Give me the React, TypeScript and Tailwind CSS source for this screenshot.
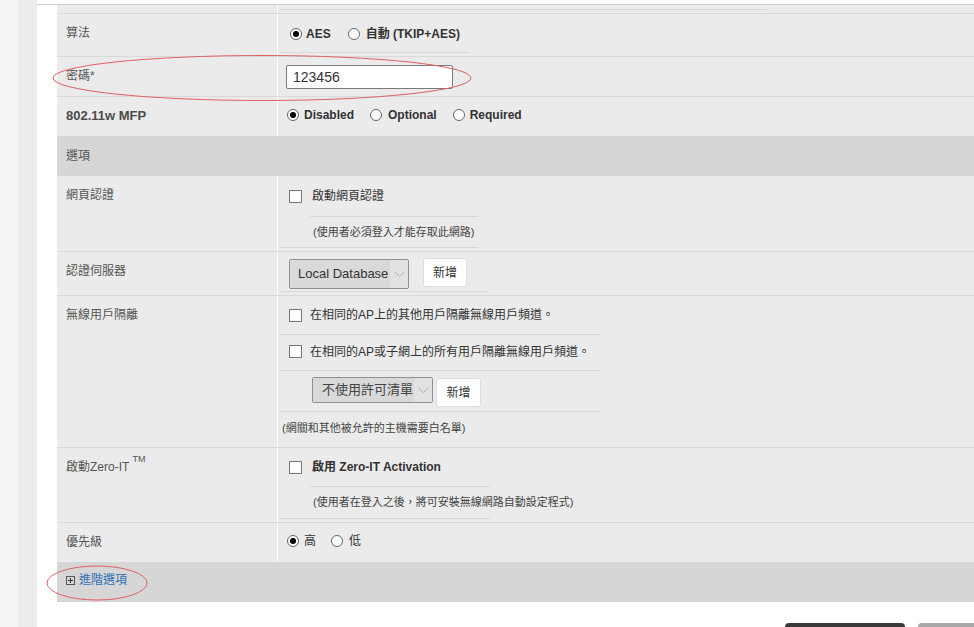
import React from "react";

function Radio({ checked }: { checked?: boolean }) {
  return (
    <span className="w-[12px] h-[12px] rounded-full border border-[#666] bg-white flex items-center justify-center shrink-0">
      {checked && <span className="w-[6px] h-[6px] rounded-full bg-black" />}
    </span>
  );
}

function Checkbox() {
  return <span className="w-[13px] h-[13px] border border-[#777] bg-white shrink-0" />;
}

function Chevron() {
  return (
    <svg width="11" height="7" viewBox="0 0 11 7" className="shrink-0">
      <path d="M0.5 0.5 L5.5 5.5 L10.5 0.5" fill="none" stroke="#b0b0b0" strokeWidth="1" />
    </svg>
  );
}

function Row({
  label,
  h,
  border = true,
  children,
}: {
  label: React.ReactNode;
  h: string;
  border?: boolean;
  children?: React.ReactNode;
}) {
  return (
    <div className={`flex ${h} ${border ? "border-b border-[#d9d9d9]" : ""}`}>
      <div className="w-[220px] shrink-0 pl-[9px] pt-[12px] leading-[14px] text-[12px] text-[#555]">{label}</div>
      <div className="flex-1 border-l border-white">{children}</div>
    </div>
  );
}

export default function App() {
  return (
    <div className="w-[974px] h-[627px] overflow-hidden flex bg-white relative font-['Liberation_Sans','Noto_Sans_CJK_TC',sans-serif]">
      <div className="w-[18px] shrink-0 bg-[#f4f4f4]" />
      <div className="w-[19px] shrink-0 bg-[#ececec]" />

      <div className="flex-1 min-w-0 flex flex-col">
        <div className="h-[4px] shrink-0" />
        <div className="border-t border-[#cdcdcd] pl-[20px]">
          <div className="w-[960px] bg-[#ebebeb]">
            {/* previous row tail */}
            <div className="flex h-[9px] border-b border-[#d9d9d9]">
              <div className="w-[220px] shrink-0" />
              <div className="flex-1 border-l border-white">
                <div className="ml-[2px] w-[487px] h-[5px] border-b border-[#d9d9d9]" />
              </div>
            </div>

            <Row label="算法" h="h-[43px]">
              <div className="ml-[2px] w-[188px] h-[39px] border-b border-[#d9d9d9] flex items-center pl-[10px] pt-[1px] text-[12px] font-bold text-[#333]">
                <Radio checked />
                <span className="ml-[4px]">AES</span>
                <span className="ml-[17px]"><Radio /></span>
                <span className="ml-[6px]">自動 (TKIP+AES)</span>
              </div>
            </Row>

            <Row label="密碼*" h="h-[40px]">
              <div className="pl-[8px] pt-[8px]">
                <div className="w-[167px] h-[24px] border border-[#7a7a7a] bg-white rounded-[2px] flex items-center pl-[6px] text-[14px] text-[#333]">
                  123456
                </div>
              </div>
            </Row>

            <Row label={<span className="font-bold text-[13px] text-[#4a4a4a]">802.11w MFP</span>} h="h-[39px]" border={false}>
              <div className="flex items-center pl-[9px] pt-[11px] h-[14px] box-content text-[12px] font-bold text-[#333]">
                <Radio checked />
                <span className="ml-[5px]">Disabled</span>
                <span className="ml-[16px]"><Radio /></span>
                <span className="ml-[6px]">Optional</span>
                <span className="ml-[16px]"><Radio /></span>
                <span className="ml-[5px]">Required</span>
              </div>
            </Row>

            <div className="h-[40px] bg-[#d6d6d6] pl-[9px] pt-[13px] leading-[14px] text-[12px] text-[#555]">選項</div>

            <Row label="網頁認證" h="h-[76px]">
              <div className="ml-[2px] w-[198px] h-[72px] border-b border-[#d9d9d9]">
                <div className="h-[40px] flex items-center pl-[9px] text-[12px] text-[#333]">
                  <Checkbox />
                  <span className="ml-[10px]">啟動網頁認證</span>
                </div>
                <div className="ml-[30px] h-[31px] border-t border-[#d9d9d9] flex items-center pl-[3px] text-[11px] text-[#444] whitespace-nowrap">
                  (使用者必須登入才能存取此網路)
                </div>
              </div>
            </Row>

            <Row label="認證伺服器" h="h-[44px]">
              <div className="ml-[2px] w-[208px] h-[40px] border-b border-[#d9d9d9] flex items-start">
                <div className="ml-[9px] mt-[7px] w-[120px] h-[30px] border border-[#8f8f8f] rounded-[2px] flex overflow-hidden">
                  <div className="flex-1 bg-[#d9d9d9] flex items-center pl-[8px] text-[13px] text-[#333] whitespace-nowrap">Local Database</div>
                  <div className="w-[18px] bg-[#e2e2e2] flex items-center justify-center">
                    <Chevron />
                  </div>
                </div>
                <div className="ml-[14px] mt-[6px] w-[44px] h-[29px] bg-white border border-[#dedede] rounded-[3px] flex items-center justify-center text-[12px] text-[#333]">
                  新增
                </div>
              </div>
            </Row>

            <Row label="無線用戶隔離" h="h-[152px]">
              <div className="ml-[2px] w-[320px]">
                <div className="h-[39px] border-b border-[#d9d9d9] flex items-center pl-[9px] text-[12px] text-[#333]">
                  <Checkbox />
                  <span className="ml-[8px]">在相同的AP上的其他用戶隔離無線用戶頻道。</span>
                </div>
                <div className="h-[36px] border-b border-[#d9d9d9] flex items-center pl-[9px] pb-[2px] text-[12px] text-[#333]">
                  <Checkbox />
                  <span className="ml-[8px]">在相同的AP或子網上的所有用戶隔離無線用戶頻道。</span>
                </div>
                <div className="h-[41px] border-b border-[#d9d9d9] flex items-start">
                  <div className="ml-[32px] mt-[6px] w-[121px] h-[26px] border border-[#8f8f8f] rounded-[2px] flex overflow-hidden">
                    <div className="flex-1 bg-[#d9d9d9] flex items-center pl-[9px] text-[13px] text-[#444] whitespace-nowrap">不使用許可清單</div>
                    <div className="w-[18px] bg-[#e2e2e2] flex items-center justify-center">
                      <Chevron />
                    </div>
                  </div>
                  <div className="ml-[3px] mt-[7px] w-[45px] h-[29px] bg-white border border-[#dedede] rounded-[3px] flex items-center justify-center text-[12px] text-[#333]">
                    新增
                  </div>
                </div>
                <div className="h-[33px] flex items-center pl-[2px] text-[11px] text-[#444] whitespace-nowrap">
                  (網關和其他被允許的主機需要白名單)
                </div>
              </div>
            </Row>

            <Row
              label={
                <span>
                  啟動Zero-IT <sup className="text-[9px] align-[5px]">TM</sup>
                </span>
              }
              h="h-[75px]"
            >
              <div className="ml-[2px] w-[210px] h-[71px] border-b border-[#d9d9d9]">
                <div className="h-[38px] flex items-center pl-[9px] text-[12px] font-bold text-[#333]">
                  <Checkbox />
                  <span className="ml-[10px]">啟用 Zero-IT Activation</span>
                </div>
                <div className="ml-[30px] h-[32px] border-t border-[#d9d9d9] flex items-center pl-[3px] text-[11px] text-[#444] whitespace-nowrap">
                  (使用者在登入之後，將可安裝無線網路自動設定程式)
                </div>
              </div>
            </Row>

            <Row label="優先級" h="h-[39px]" border={false}>
              <div className="flex items-center pl-[9px] pt-[11px] h-[14px] box-content text-[12px] text-[#333]">
                <Radio checked />
                <span className="ml-[5px]">高</span>
                <span className="ml-[15px]"><Radio /></span>
                <span className="ml-[6px]">低</span>
              </div>
            </Row>

            <div className="h-[40px] bg-[#d6d6d6] flex items-center pl-[9px] pb-[4px] text-[12px]">
              <span className="w-[9px] h-[9px] border border-[#555] flex items-center justify-center relative shrink-0">
                <span className="absolute w-[5px] h-px bg-[#333]" />
                <span className="absolute w-px h-[5px] bg-[#333]" />
              </span>
              <span className="ml-[4px] text-[#2f6fb4]">進階選項</span>
            </div>
          </div>
        </div>

        <div className="flex ml-[748px] mt-[21px] gap-[13px]">
          <div className="w-[120px] h-[30px] rounded-[4px] bg-[#3a3a3a] shrink-0" />
          <div className="w-[100px] h-[30px] rounded-[4px] bg-[#a9a9a9] shrink-0" />
        </div>
      </div>

      {/* annotation ellipses */}
      <svg className="absolute inset-0 pointer-events-none" width="974" height="627">
        <ellipse cx="262" cy="78" rx="209" ry="22.5" fill="none" stroke="#e06060" strokeWidth="1" />
        <ellipse cx="97" cy="583" rx="50" ry="17" fill="none" stroke="#e06060" strokeWidth="1" />
      </svg>
    </div>
  );
}
